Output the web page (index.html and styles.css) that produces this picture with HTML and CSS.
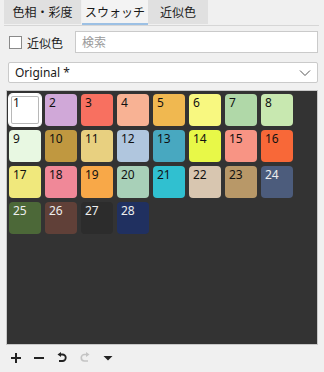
FILE: index.html
```html
<!DOCTYPE html>
<html lang="ja">
<head>
  <meta charset="UTF-8">
  <title>スウォッチ</title>
  <link rel="stylesheet" href="styles.css">
</head>
<body>

  <div class="tabs">
    <div class="tab tab-hue">色相・彩度</div>
    <div class="tab tab-swatch active">スウォッチ</div>
    <div class="tab tab-near">近似色</div>
  </div>

  <div class="filter-row">
    <label class="check">
      <span class="box"></span>
      <span>近似色</span>
    </label>
    <div class="search">検索</div>
  </div>

  <div class="select">
    <span>Original *</span>
    <svg width="12" height="8" viewBox="0 0 12 8">
      <path d="M1 1.5 L6 6.5 L11 1.5" fill="none" stroke="#555" stroke-width="1"/>
    </svg>
  </div>

  <div class="panel">
    <div class="grid">
      <div class="swatch selected" style="background:#ffffff">1</div>
      <div class="swatch" style="background:#d0a8d8">2</div>
      <div class="swatch" style="background:#f87060">3</div>
      <div class="swatch" style="background:#f8b294">4</div>
      <div class="swatch" style="background:#f0b850">5</div>
      <div class="swatch" style="background:#f8f880">6</div>
      <div class="swatch" style="background:#b0d8a8">7</div>
      <div class="swatch" style="background:#c8e8b0">8</div>
      <div class="swatch" style="background:#e8f8e2">9</div>
      <div class="swatch" style="background:#c09840">10</div>
      <div class="swatch" style="background:#e8d080">11</div>
      <div class="swatch" style="background:#b0c6de">12</div>
      <div class="swatch" style="background:#48a8c0">13</div>
      <div class="swatch" style="background:#e8f848">14</div>
      <div class="swatch" style="background:#f89484">15</div>
      <div class="swatch" style="background:#f86838">16</div>
      <div class="swatch" style="background:#f0e87c">17</div>
      <div class="swatch" style="background:#f08898">18</div>
      <div class="swatch" style="background:#f8a848">19</div>
      <div class="swatch" style="background:#a8d0b8">20</div>
      <div class="swatch" style="background:#30c0d0">21</div>
      <div class="swatch" style="background:#d8c6b0">22</div>
      <div class="swatch" style="background:#b89868">23</div>
      <div class="swatch dark" style="background:#4c5c7c">24</div>
      <div class="swatch dark" style="background:#4c6838">25</div>
      <div class="swatch dark" style="background:#604038">26</div>
      <div class="swatch dark" style="background:#2c2c2c">27</div>
      <div class="swatch dark" style="background:#203060">28</div>
    </div>
  </div>

  <div class="toolbar">
    <svg class="tool" width="12" height="12" viewBox="0 0 12 12">
      <path d="M6 1 V11 M1 6 H11" stroke="#222" stroke-width="2"/>
    </svg>
    <svg class="tool" width="12" height="12" viewBox="0 0 12 12">
      <path d="M1 6 H11" stroke="#222" stroke-width="2"/>
    </svg>
    <!-- undo -->
    <svg class="tool" width="12" height="12" viewBox="0 0 12 12">
      <path d="M4 2.5 H6.5 A3.2 3.2 0 0 1 6.5 9 H3" fill="none" stroke="#222" stroke-width="1.8"/>
      <path d="M1.5 2.5 L5 0 V5 Z" fill="#222"/>
    </svg>
    <!-- redo, disabled -->
    <svg class="tool" width="12" height="12" viewBox="0 0 12 12">
      <path d="M8 2.5 H5.5 A3.2 3.2 0 0 0 5.5 9 H9" fill="none" stroke="#c4c4c4" stroke-width="1.6"/>
      <path d="M10.5 2.5 L7 0 V5 Z" fill="#c4c4c4"/>
    </svg>
    <svg class="tool" width="12" height="12" viewBox="0 0 12 12">
      <path d="M1.5 4 H10.5 L6 8.5 Z" fill="#222"/>
    </svg>
  </div>

</body>
</html>
```

FILE: styles.css
```css
body {
  margin: 0;
  background: #f0f0f0;
  font-family: 'Noto Sans', 'Noto Sans CJK JP', sans-serif;
  font-size: 12px;
  color: #1a1a1a;
  width: 324px;
  height: 372px;
  overflow: hidden;
}

.tabs {
  display: flex;
  margin: 0 5px 0 4px;
  height: 25px;
  border-bottom: 1px solid #d6d6d6;
}

.tab {
  height: 24px;
  line-height: 23px;
  text-align: center;
  background: #e0e0e0;
  font-family: 'Noto Sans CJK JP', sans-serif;
  font-size: 12px;
}

.tab-hue {
  width: 77px;
  margin-right: 1px;
}

.tab-swatch {
  width: 66px;
}

.tab-near {
  width: 60px;
}

.tab.active {
  background: #f3f3f3;
  height: 23px;
  border-bottom: 2px solid #9cc0e4;
}

.filter-row {
  display: flex;
  align-items: center;
  margin: 5px 6px 0 9px;
  height: 22px;
}

.check {
  display: flex;
  align-items: center;
  font-family: 'Noto Sans CJK JP', sans-serif;
  font-size: 12px;
  width: 66px;
}

.box {
  width: 11px;
  height: 11px;
  border: 1px solid #8a8a8a;
  background: #fff;
  margin-right: 5px;
}

.search {
  flex: 1;
  height: 20px;
  line-height: 20px;
  border: 1px solid #cacaca;
  background: #fff;
  padding-left: 6px;
  color: #9a9a9a;
  font-family: 'Noto Sans CJK JP', sans-serif;
}

.select {
  display: flex;
  align-items: center;
  justify-content: space-between;
  margin: 9px 6px 0 8px;
  height: 19px;
  border: 1px solid #cacaca;
  border-radius: 2px;
  background: #fff;
  padding: 0 6px 0 6px;
  font-size: 12px;
}

.panel {
  margin: 7px 6px 0 6px;
  height: 255px;
  border: 1px solid #c8c8c8;
  background: #333333;
  padding: 3px 0 0 2px;
  box-sizing: border-box;
}

.grid {
  display: grid;
  grid-template-columns: repeat(8, 32px);
  grid-auto-rows: 32px;
  gap: 4px;
}

.swatch {
  border-radius: 4px;
  padding: 2px 0 0 4px;
  box-sizing: border-box;
  font-size: 12px;
  line-height: 14px;
  color: #111;
}

.swatch.dark {
  color: #eee;
}

.swatch.selected {
  box-shadow: 0 0 0 1px #fff, inset 0 0 0 2px #fff, inset 0 0 0 3px #b8b8b8;
}

.toolbar {
  display: flex;
  align-items: center;
  gap: 11px;
  margin: 7px 0 0 10px;
  height: 12px;
}
```
